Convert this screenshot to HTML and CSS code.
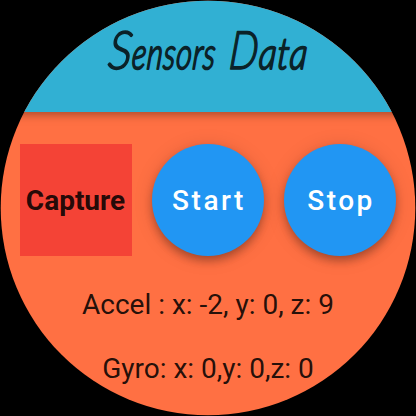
FILE: index.html
```
<!DOCTYPE html>
<html lang="en">
<head>
<meta charset="utf-8">
<title>Sensors Data</title>
<link rel="stylesheet" href="styles.css">
</head>
<body>
<main class="watch">
  <header class="bar">
    <svg class="title" width="416" height="112" viewBox="0 0 416 112" role="heading" aria-label="Sensors Data">
      <text transform="translate(0 69) skewX(-5)"><tspan class="cap" x="107" textLength="24" lengthAdjust="spacingAndGlyphs">S</tspan><tspan class="low" x="131" textLength="84" lengthAdjust="spacingAndGlyphs">ensors</tspan> <tspan class="cap" x="228" textLength="29" lengthAdjust="spacingAndGlyphs">D</tspan><tspan class="low" x="258" textLength="49" lengthAdjust="spacingAndGlyphs">ata</tspan></text>
    </svg>
  </header>
  <section class="actions">
    <button class="btn capture">Capture</button>
    <button class="btn round">Start</button>
    <button class="btn round">Stop</button>
  </section>
  <p class="reading accel">Accel : x: -2, y: 0, z: 9</p>
  <p class="reading gyro">Gyro: x: 0,y: 0,z: 0</p>
</main>
</body>
</html>
```
FILE: styles.css
```
body {
  margin: 0;
  background: #000;
  font-family: Roboto, sans-serif;
}
.watch {
  width: 416px;
  height: 416px;
  overflow: hidden;
  background: #ff7043;
  clip-path: circle(207.3px at 208px 208px);
  color: rgba(0, 0, 0, 0.87);
}
.bar {
  height: 112px;
  background: #31b0d3;
  box-shadow: 0 4px 8px -2px rgba(0, 0, 0, 0.18), 0 4px 10px rgba(0, 0, 0, 0.12), 0 1px 8px rgba(0, 0, 0, 0.08);
}
.title {
  display: block;
  font-family: Lato, sans-serif;
  font-style: italic;
  font-weight: 300;
  fill: #0b2228;
  stroke: #0b2228;
  stroke-width: 1.5px;
  stroke-linejoin: round;
}
.cap { font-size: 53px; }
.low {
  font-size: 44px;
  letter-spacing: 1px;
  stroke-width: 2px;
}
.actions {
  display: flex;
  gap: 20px;
  padding: 32px 20px 0;
}
.btn {
  width: 112px;
  height: 112px;
  padding: 0;
  border: 0;
  font: 500 28px/33px Roboto, sans-serif;
}
.capture {
  background: #f44336;
  padding-right: 1px;
  color: rgba(0, 0, 0, 0.87);
  font-weight: 700;
}
.round {
  padding-left: 2px;
  border-radius: 50%;
  background: #2196f3;
  color: #fff;
  letter-spacing: 2.5px;
  box-shadow: 0 6px 10px -2px rgba(0, 0, 0, 0.2), 0 4px 10px rgba(0, 0, 0, 0.14), 0 2px 20px rgba(0, 0, 0, 0.12);
}
.reading {
  margin: 0;
  font-size: 28px;
  line-height: 32px;
  text-align: center;
  white-space: nowrap;
}
.accel { margin-top: 33px; }
.gyro { margin-top: 32px; }
```
